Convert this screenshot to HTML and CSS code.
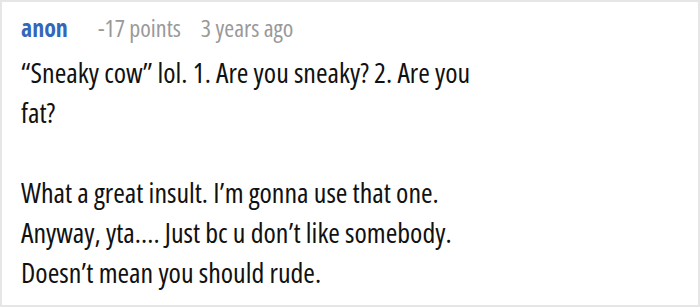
FILE: index.html
```html
<!DOCTYPE html>
<html>
<head>
  <title>Comment</title>
  <link rel="stylesheet" href="styles.css">
</head>
<body>
  <div class="comment">
    <div class="comment-meta">
      <span class="author">anon</span>
      <span class="points">-17 points</span>
      <span class="age">3 years ago</span>
    </div>
    <div class="comment-body">
      <p>“Sneaky cow” lol. 1. Are you sneaky? 2. Are you fat?</p>
      <p>What a great insult. I’m gonna use that one. Anyway, yta…. Just bc u don’t like somebody. Doesn’t mean you should rude.</p>
    </div>
  </div>
</body>
</html>
```

FILE: styles.css
```css
body {
  margin: 0;
  padding: 0;
  font-family: 'Open Sans', 'Noto Sans', sans-serif;
  font-stretch: condensed;
  background: white;
}

.comment {
  width: 700px;
  height: 307px;
  box-sizing: border-box;
  border: 2px solid #e6e6e6;
  padding: 14px 19px 0 19px;
  overflow: hidden;
}

.comment-meta {
  display: flex;
  align-items: baseline;
  font-size: 24px;
  line-height: 24px;
}

.author {
  color: #3466b9;
  font-weight: 700;
  margin-right: 30px;
}

.points,
.age {
  color: #999;
  margin-right: 20px;
}

.comment-body {
  width: 482px;
  margin-top: 12px;
  font-size: 28px;
  line-height: 40px;
  color: #111;
}

.comment-body p {
  margin: 0 0 40px 0;
}
```
